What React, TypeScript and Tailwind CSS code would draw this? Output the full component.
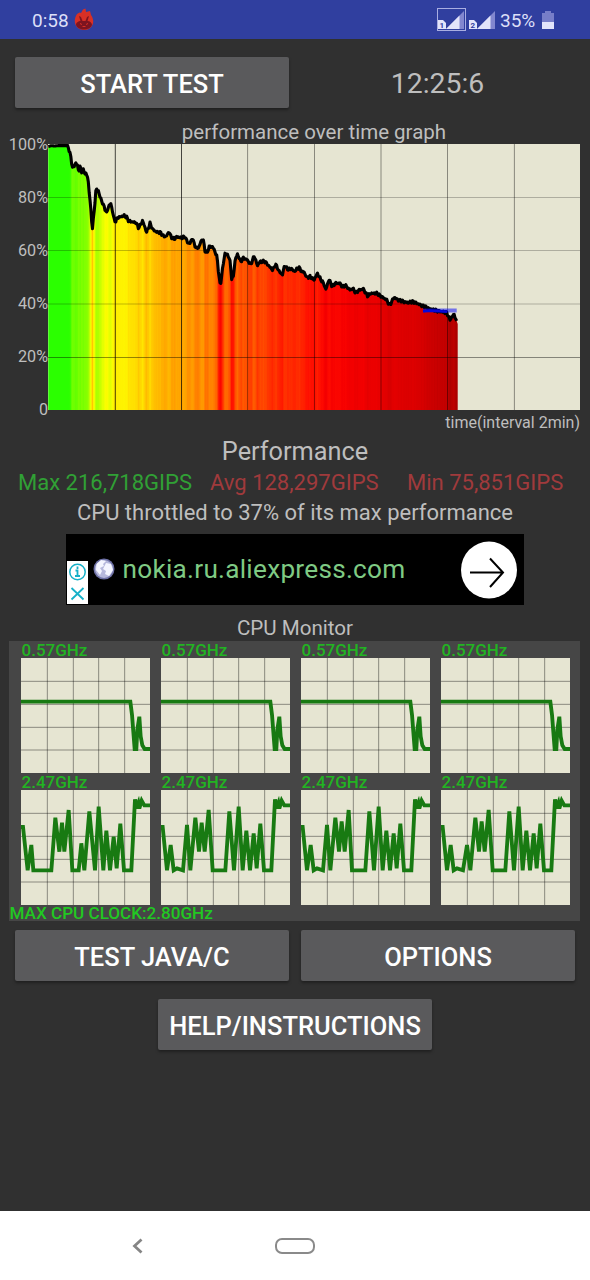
import React from "react";

type Pt = [number, number];

const parse = (s: string): Pt[] =>
  s.trim().split(/\s+/).map((p) => p.split(",").map(Number) as Pt);

// Samples of the performance curve, three units per pixel.
const SAMPLES = parse(`
1,8 10,5 20,6 30,5 40,5 50,5 56,5 61,10 68,36 73,70 78,68 83,56 88,63 92,83 96,68 101,83 106,78 110,88 114,88
120,103 122,128 126,168 133,256 139,198 144,135 151,140 156,158 166,183 176,207 182,186 188,178 193,198 198,226
203,233 208,221 218,218 228,215 236,220 242,231 251,233 264,236 272,252 284,230 290,248 296,265 306,238 314,256
326,264 338,266 346,276 354,278 363,263 370,280 378,286 386,278 401,282 411,278 418,294 425,300 433,282 439,300
445,314 454,308 459,290 466,288 471,321 478,326 483,308 494,308 501,323 507,338 512,388 517,428 523,378 531,328
542,336 547,358 551,404 556,398 562,343 569,331 578,353 586,342 598,348 608,362 619,335 628,365 636,353 651,353
661,364 674,378 683,361 694,383 703,393 710,363 718,376 731,374 738,383 753,370 761,383 768,384 776,400 786,398
798,408 808,388 818,406 828,420 833,438 843,406 853,428 861,418 876,418 884,430 892,424 906,438 914,433 923,446
934,438 946,435 959,456 969,448 986,448 1001,458 1016,468 1025,484 1038,460 1051,468 1066,473 1081,476 1096,473
1111,480 1126,486 1136,491 1156,498 1196,506 1206,527 1218,510 1228,540`);

const RAMP: [number, number, number, number][] = [
  [0, 150, 0, 0],
  [34, 168, 0, 0],
  [40, 214, 0, 0],
  [47, 246, 0, 0],
  [50, 255, 12, 0],
  [55, 255, 52, 0],
  [60, 255, 112, 0],
  [65, 255, 158, 0],
  [69, 255, 200, 0],
  [73, 255, 240, 0],
  [76, 250, 255, 0],
  [83, 175, 255, 0],
  [91, 122, 255, 0],
  [93, 105, 255, 0],
  [98, 43, 255, 0],
  [101, 43, 255, 0],
];

function heat(v: number) {
  const i = Math.max(1, RAMP.findIndex((r) => r[0] >= v));
  const a = RAMP[i - 1];
  const b = RAMP[i];
  const t = (v - a[0]) / (b[0] - a[0]);
  const c = [1, 2, 3].map((k) => Math.round(a[k] + (b[k] - a[k]) * t));
  return `rgb(${c.join(",")})`;
}

function curve(): Pt[] {
  const out: Pt[] = [];
  let j = 0;
  for (let x = 1; x <= 1228; x += 2.5) {
    while (j < SAMPLES.length - 2 && SAMPLES[j + 1][0] < x) j++;
    const [x0, y0] = SAMPLES[j];
    const [x1, y1] = SAMPLES[j + 1];
    const y = y0 + ((y1 - y0) * (x - x0)) / (x1 - x0);
    const noise = x < 58 ? 0 : Math.sin(x * 1.7) * 2.6 + Math.sin(x * 0.63) * 1.8;
    out.push([x / 3, (y + noise) / 3]);
  }
  return out;
}

const CURVE = curve();
const LINE = CURVE.map((p) => p.map((n) => n.toFixed(2)).join(",")).join(" ");

function PerformanceChart() {
  return (
    <svg width="532" height="266" viewBox="0 0 532 266" className="block bg-[#e6e5d2]">
      <defs>
        <linearGradient id="heat" gradientUnits="userSpaceOnUse" x1="0" x2="409.5" y1="0" y2="0">
          {CURVE.map(([x, y]) => (
            <stop key={x} offset={x / 409.5} stopColor={heat(100 - (y - 2) / 2.66)} />
          ))}
        </linearGradient>
      </defs>
      <polygon points={`0.3,266 0.3,2.5 ${LINE} 409.7,180 409.7,266`} fill="url(#heat)" />
      <g stroke="#000" strokeWidth="1">
        {[53.5, 106.5, 160, 213.5].map((y, i) => (
          <path key={y} d={`M0 ${y}H532`} opacity={i === 3 ? 0.42 : 0.24} />
        ))}
        {[67.3, 133.5, 199.6, 266.5, 333, 399.5, 466.4].map((x, i) => (
          <path key={x} d={`M${x} 0V266`} opacity={i < 2 ? 0.7 : 0.4} />
        ))}
      </g>
      <polyline points={LINE} fill="none" stroke="#000" strokeWidth="3.1" strokeLinejoin="round" />
      <path d="M375 166.500H408.700" stroke="#0000ff" strokeWidth="4" opacity=".5" />
      <path d="M375 167.300L382 166.500L399 167.800" fill="none" stroke="#0808d8" strokeWidth="2.600" />
    </svg>
  );
}

const LITTLE = "0,131 328,131 333,170 341,273 346,273 349,215 355,176 359,235 364,262 371,273 387,273";
const CORES: { freq: string; data: string }[] = [
  ...Array.from({ length: 4 }, () => ({ freq: "0.57GHz", data: LITTLE })),
  {
    freq: "2.47GHz",
    data: "0,111 6,111 20,241 31,165 37,241 91,241 103,83 115,185 123,98 130,185 143,60 154,241 173,241 181,160 190,241 205,64 222,241 233,50 247,241 256,122 267,241 278,140 287,235 298,101 309,241 331,241 342,28 345,55 352,38 355,55 362,32 370,46 387,46",
  },
  {
    freq: "2.47GHz",
    data: "0,111 5,111 18,241 29,165 38,241 48,235 66,241 78,105 88,241 103,83 114,185 122,98 131,185 143,60 155,241 193,241 205,64 219,241 233,50 245,241 256,122 267,241 278,130 287,235 298,101 309,241 331,241 342,28 345,55 352,38 355,55 362,32 370,46 387,46",
  },
  {
    freq: "2.47GHz",
    data: "0,111 5,111 18,241 29,165 38,241 48,235 66,241 78,105 88,241 103,83 114,185 122,94 131,185 143,60 153,241 193,241 205,64 219,241 233,50 245,241 256,122 267,241 278,130 287,235 298,101 309,241 331,241 342,28 345,55 352,38 355,55 362,32 370,46 387,46",
  },
  {
    freq: "2.47GHz",
    data: "0,111 5,111 18,241 29,165 38,241 48,235 66,241 78,165 88,241 103,83 114,185 122,94 131,185 143,60 155,241 193,241 205,64 219,241 233,50 245,241 256,122 267,241 278,130 287,235 298,101 309,241 331,241 342,28 345,55 352,38 355,55 362,32 370,46 387,46",
  },
];

function CoreGraph({ freq, data }: { freq: string; data: string }) {
  return (
    <div className="w-[129px]">
      <div className="h-[17px] pl-px text-[17px] leading-[18px] font-medium text-[#22b422]">{freq}</div>
      <svg width="129" height="115" viewBox="0 0 387 345" className="block bg-[#e6e5d2]">
        <path
          d="M79 0V345M157 0V345M233 0V345M311 0V345M0 70H387M0 139H387M0 208H387M0 276H387"
          stroke="#000"
          strokeOpacity=".4"
          strokeWidth="3"
        />
        <polyline points={data} fill="none" stroke="#187a12" strokeWidth="11.5" />
      </svg>
    </div>
  );
}

function AppButton({ children }: { children: React.ReactNode }) {
  return (
    <button className="flex h-[51px] w-[274px] items-center justify-center rounded-[2px] bg-[#5a5a5c] pt-[3px] text-[25.500px] font-medium whitespace-nowrap text-white shadow-[0_2px_3px_rgba(0,0,0,0.35)]">
      {children}
    </button>
  );
}

function Signal({ n }: { n: number }) {
  return (
    <svg width="27" height="20" viewBox="0 0 27 20">
      <path d="M26 1V19H8Z" fill="#8287cf" />
      <path d="M21.500 5.500V19H8Z" fill="#e2e4fa" />
      <path d="M0 10H5L8 13V19H0Z" fill="#e2e4fa" />
      <text x="3.900" y="17.500" textAnchor="middle" fontSize="8" fontWeight="700" fill="#303f9f">{n}</text>
    </svg>
  );
}

function StatusBar() {
  return (
    <header className="flex h-[39px] items-center bg-[#303f9f] pr-[36px] pl-[32px] text-[19px] text-[#dcdff8]">
      <span className="mt-[3px] w-[42px]">0:58</span>
      <svg width="20" height="23" viewBox="0 0 20 23">
        <path d="M3 6L5.500 4.500L7 5L9 1.500L11.500 .5L12 4L16 3L17 7C22 14 18 22 10 22C2 22-2 14 3 6Z" fill="#d93025" />
        <path d="M2 17C2 14 5 13 6.500 13L5 8L7 9L8.500 13H11.500L13 9L15 8L13.500 13C16 13 18 15 18 17C16 23 4 23 2 17Z" fill="#7d1420" />
        <path d="M6 15.500L8 16.500M14 15.500L12 16.500M8.500 18.500H11.500" stroke="#d93025" />
      </svg>
      <div className="ml-auto flex items-center">
        <div className="mr-[3px] flex h-[23px] w-[29px] items-end justify-center border border-[#a9aee2]">
          <Signal n={1} />
        </div>
        <Signal n={2} />
        <span className="mt-[3px] ml-[4px] w-[35px]">35%</span>
        <svg width="12" height="18" viewBox="0 0 12 18" className="ml-[7px]">
          <path d="M3 0H9V2H12V18H0V2H3Z" fill="#777ec8" />
          <path d="M0 11H12V18H0Z" fill="#e2e4fa" />
        </svg>
      </div>
    </header>
  );
}

function AdBanner() {
  return (
    <div className="ml-[65.500px] flex h-[71px] w-[458.500px] bg-black">
      <div className="mt-[27px] ml-[1.500px] h-[43px] w-[21px] bg-white">
        <svg width="21" height="43" viewBox="0 0 21 43" fill="none" stroke="#15b0c8">
          <circle cx="10.500" cy="11" r="7.700" strokeWidth="1.500" />
          <path d="M8.500 9.500H10.500V15M8 15H13M10.500 5.500V8" strokeWidth="1.800" />
          <path d="M4.500 27L16.500 38.500M16.500 27L4.500 38.500" strokeWidth="1.800" />
        </svg>
      </div>
      <svg width="22" height="24" viewBox="0 0 22 24" className="mt-[23px] ml-[5px]">
        <circle cx="11" cy="12" r="10.500" fill="#6d70a4" />
        <circle cx="11" cy="12" r="9" fill="#b6b8dc" />
        <path d="M3.500 7L8 3L13 4L10 7L11 9L7 11L9 14L7 18L3 13ZM13 6L18 7L20 13L16 19L12 17L13 14L10 12Z" fill="#f4f5ff" />
      </svg>
      <span className="mt-[17px] ml-[7.500px] text-[26.200px] leading-[36px] tracking-[0.260px] text-[#7fca84]">
        nokia.ru.aliexpress.com
      </span>
      <svg width="56" height="58" viewBox="0 0 56 58" className="mt-[7px] mr-[7px] ml-auto">
        <ellipse cx="28" cy="29" rx="28" ry="28.500" fill="#fff" />
        <path d="M9 31.500H42M29 17.500L42 31.500L29 46" fill="none" stroke="#000" strokeWidth="2" />
      </svg>
    </div>
  );
}

export default function App() {
  return (
    <div className="flex h-[1280px] w-[590px] flex-col overflow-hidden bg-[#303030] font-[Roboto,sans-serif] text-[#bebebe]">
      <StatusBar />
      <div className="mt-[18px] flex h-[52px] pl-[15px]">
        <AppButton>START TEST</AppButton>
        <div className="flex-1 pr-[4px] text-center text-[28.400px] leading-[54px]">12:25:6</div>
      </div>

      <section className="mt-[10px]">
        <h2 className="h-[25px] pl-[38px] text-center text-[20.500px] leading-[27px]">performance over time graph</h2>
        <div className="flex h-[266px]">
          <div className="flex w-[48px] flex-col items-end text-[16.200px] leading-[20px]">
            {["100%", "80%", "60%", "40%", "20%", "0"].map((t) => (
              <div key={t} className="-mt-[9px] mb-[9px] h-[53px] shrink-0">{t}</div>
            ))}
          </div>
          <PerformanceChart />
        </div>
      </section>

      <div className="h-[25px] pr-[10px] text-right text-[16px] leading-[25px]">time(interval 2min)</div>
      <h2 className="h-[34px] text-center text-[25.300px] leading-[33px]">Performance</h2>
      <div className="flex h-[30px] pl-[18px] text-[22px] leading-[28px] whitespace-nowrap">
        <span className="w-[192px] text-[#30a035]">Max 216,718GIPS</span>
        <span className="w-[197px] text-[#a03a3c]">Avg 128,297GIPS</span>
        <span className="text-[#a03a3c]">Min 75,851GIPS</span>
      </div>
      <p className="h-[35px] text-center text-[22px] leading-[28px]">CPU throttled to 37% of its max performance</p>
      <AdBanner />

      <h2 className="mt-[10px] h-[26px] text-center text-[20.600px] leading-[26px]">CPU Monitor</h2>
      <section className="ml-[9px] h-[280px] w-[571px] bg-[#464646]">
        <div className="grid grid-cols-[repeat(4,129px)] gap-x-[11px] pl-[11.500px]">
          {CORES.map((c, i) => (
            <CoreGraph key={i} {...c} />
          ))}
        </div>
        <div className="pl-[0.500px] text-[17.100px] leading-[17px] font-medium text-[#22c822]">MAX CPU CLOCK:2.80GHz</div>
      </section>
      <div className="mt-[9px] flex gap-[12px] pl-[15px]">
        <AppButton>TEST JAVA/C</AppButton>
        <AppButton>OPTIONS</AppButton>
      </div>
      <div className="mt-[18px] flex justify-center">
        <AppButton>HELP/INSTRUCTIONS</AppButton>
      </div>

      <nav className="mt-auto flex h-[69px] items-center bg-white pl-[132px]">
        <svg width="12" height="16" viewBox="0 0 12 16" fill="none" stroke="#858585" strokeWidth="2.800">
          <path d="M9.500 1.500L2.500 8L9.500 14.500" />
        </svg>
        <div className="ml-[131px] h-[16px] w-[40px] rounded-[7px] border-2 border-[#8a8a8a]" />
      </nav>
    </div>
  );
}
